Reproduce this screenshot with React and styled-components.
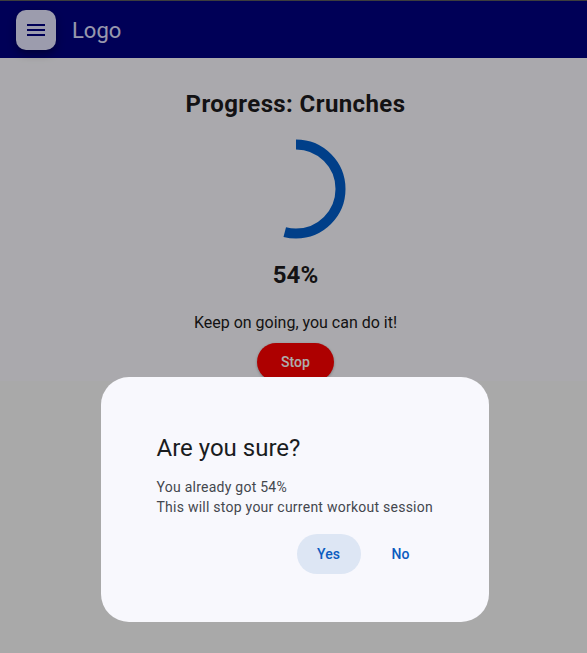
import React from 'react';
import styled, { createGlobalStyle } from 'styled-components';

const GlobalStyle = createGlobalStyle`
  html, body {
    margin: 0;
    padding: 0;
    background: #fafafa;
    font-family: Roboto, "Noto Sans", "Liberation Sans", sans-serif;
  }
  * { box-sizing: border-box; }
`;

const progress = 54;

const Ring = ({ value }) => {
  const r = 44.5;
  const c = 2 * Math.PI * r;
  return (
    <svg width="100" height="100" viewBox="0 0 100 100">
      <circle
        cx="50"
        cy="50"
        r={r}
        fill="none"
        stroke="#005ecb"
        strokeWidth="10"
        strokeDasharray={`${(c * value) / 100} ${c}`}
        transform="rotate(-90 50 50)"
      />
    </svg>
  );
};

export default function App() {
  return (
    <>
      <GlobalStyle />
      <Page>
        <Header>
          <MenuButton>
            <svg width="20" height="20" viewBox="0 0 20 20">
              <path d="M1 5h18M1 10h18M1 15h18" stroke="#000080" strokeWidth="2" />
            </svg>
          </MenuButton>
          <LogoText>Logo</LogoText>
        </Header>
        <Main>
          <Title>Progress: Crunches</Title>
          <RingWrap>
            <Ring value={progress} />
          </RingWrap>
          <Percent>{progress}%</Percent>
          <Cheer>Keep on going, you can do it!</Cheer>
          <StopButton>Stop</StopButton>
        </Main>
      </Page>
      <Overlay>
        <Dialog>
          <DialogTitle>Are you sure?</DialogTitle>
          <DialogBody>
            You already got {progress}%
            <br />
            This will stop your current workout session
          </DialogBody>
          <Actions>
            <ActionButton $primary>Yes</ActionButton>
            <ActionButton>No</ActionButton>
          </Actions>
        </Dialog>
      </Overlay>
    </>
  );
}

const Page = styled.div`
  min-height: 653px;
  background: #fafafa;
`;

const Header = styled.header`
  height: 58px;
  background: #000080;
  border-top: 1px solid #5a5a5a;
  display: flex;
  align-items: center;
  gap: 16px;
  padding: 0 16px;
`;

const MenuButton = styled.button`
  width: 40px;
  height: 40px;
  border: none;
  border-radius: 10px;
  background: #e6e6ff;
  box-shadow: 0 4px 8px rgba(0, 0, 0, 0.35);
  display: flex;
  align-items: center;
  justify-content: center;
  padding: 0;
`;

const LogoText = styled.span`
  font-size: 22px;
  line-height: 28px;
  margin-top: 2px;
  color: #e0e0ff;
`;

const Main = styled.main`
  height: 323px;
  background: #fbfaff;
  display: flex;
  flex-direction: column;
  align-items: center;
  padding: 30px 0 0 4px;
`;

const Title = styled.h1`
  margin: 0;
  font-size: 24px;
  line-height: 32px;
  font-weight: 700;
  letter-spacing: 0.4px;
  color: #1d1b20;
`;

const RingWrap = styled.div`
  margin-top: 19px;
  height: 100px;
`;

const Percent = styled.div`
  margin-top: 20px;
  font-size: 24px;
  line-height: 32px;
  font-weight: 700;
  color: #1d1b20;
`;

const Cheer = styled.p`
  margin: 20px 0 0;
  font-size: 16px;
  line-height: 24px;
  color: #1d1b20;
`;

const StopButton = styled.button`
  margin-top: 8px;
  height: 40px;
  padding: 0 24px;
  border: none;
  border-radius: 20px;
  background: #ff0000;
  color: #ffffff;
  font-family: inherit;
  font-size: 14px;
  font-weight: 500;
  box-shadow: 0 1px 3px rgba(0, 0, 0, 0.3);
`;

const Overlay = styled.div`
  position: fixed;
  inset: 0;
  background: rgba(0, 0, 0, 0.32);
  display: flex;
  flex-direction: column;
  align-items: center;
  padding: 377px 0 0 2px;
`;

const Dialog = styled.div`
  width: 388px;
  height: 245px;
  background: #f8f8fd;
  border-radius: 28px;
  padding: 55px 56px 0;
`;

const DialogTitle = styled.h2`
  margin: 0;
  font-size: 24px;
  line-height: 32px;
  font-weight: 400;
  color: #1a1c1e;
`;

const DialogBody = styled.p`
  margin: 13px 0 0;
  font-size: 14px;
  line-height: 20px;
  letter-spacing: 0.25px;
  white-space: nowrap;
  color: #44474e;
`;

const Actions = styled.div`
  display: flex;
  justify-content: flex-end;
  gap: 8px;
  margin-top: 17px;
`;

const ActionButton = styled.button`
  width: 64px;
  height: 40px;
  border: none;
  border-radius: 20px;
  background: ${(p) => (p.$primary ? '#dde6f4' : 'transparent')};
  color: #0b5cc0;
  font-family: inherit;
  font-size: 14px;
  font-weight: 500;
  letter-spacing: 0.1px;
`;
